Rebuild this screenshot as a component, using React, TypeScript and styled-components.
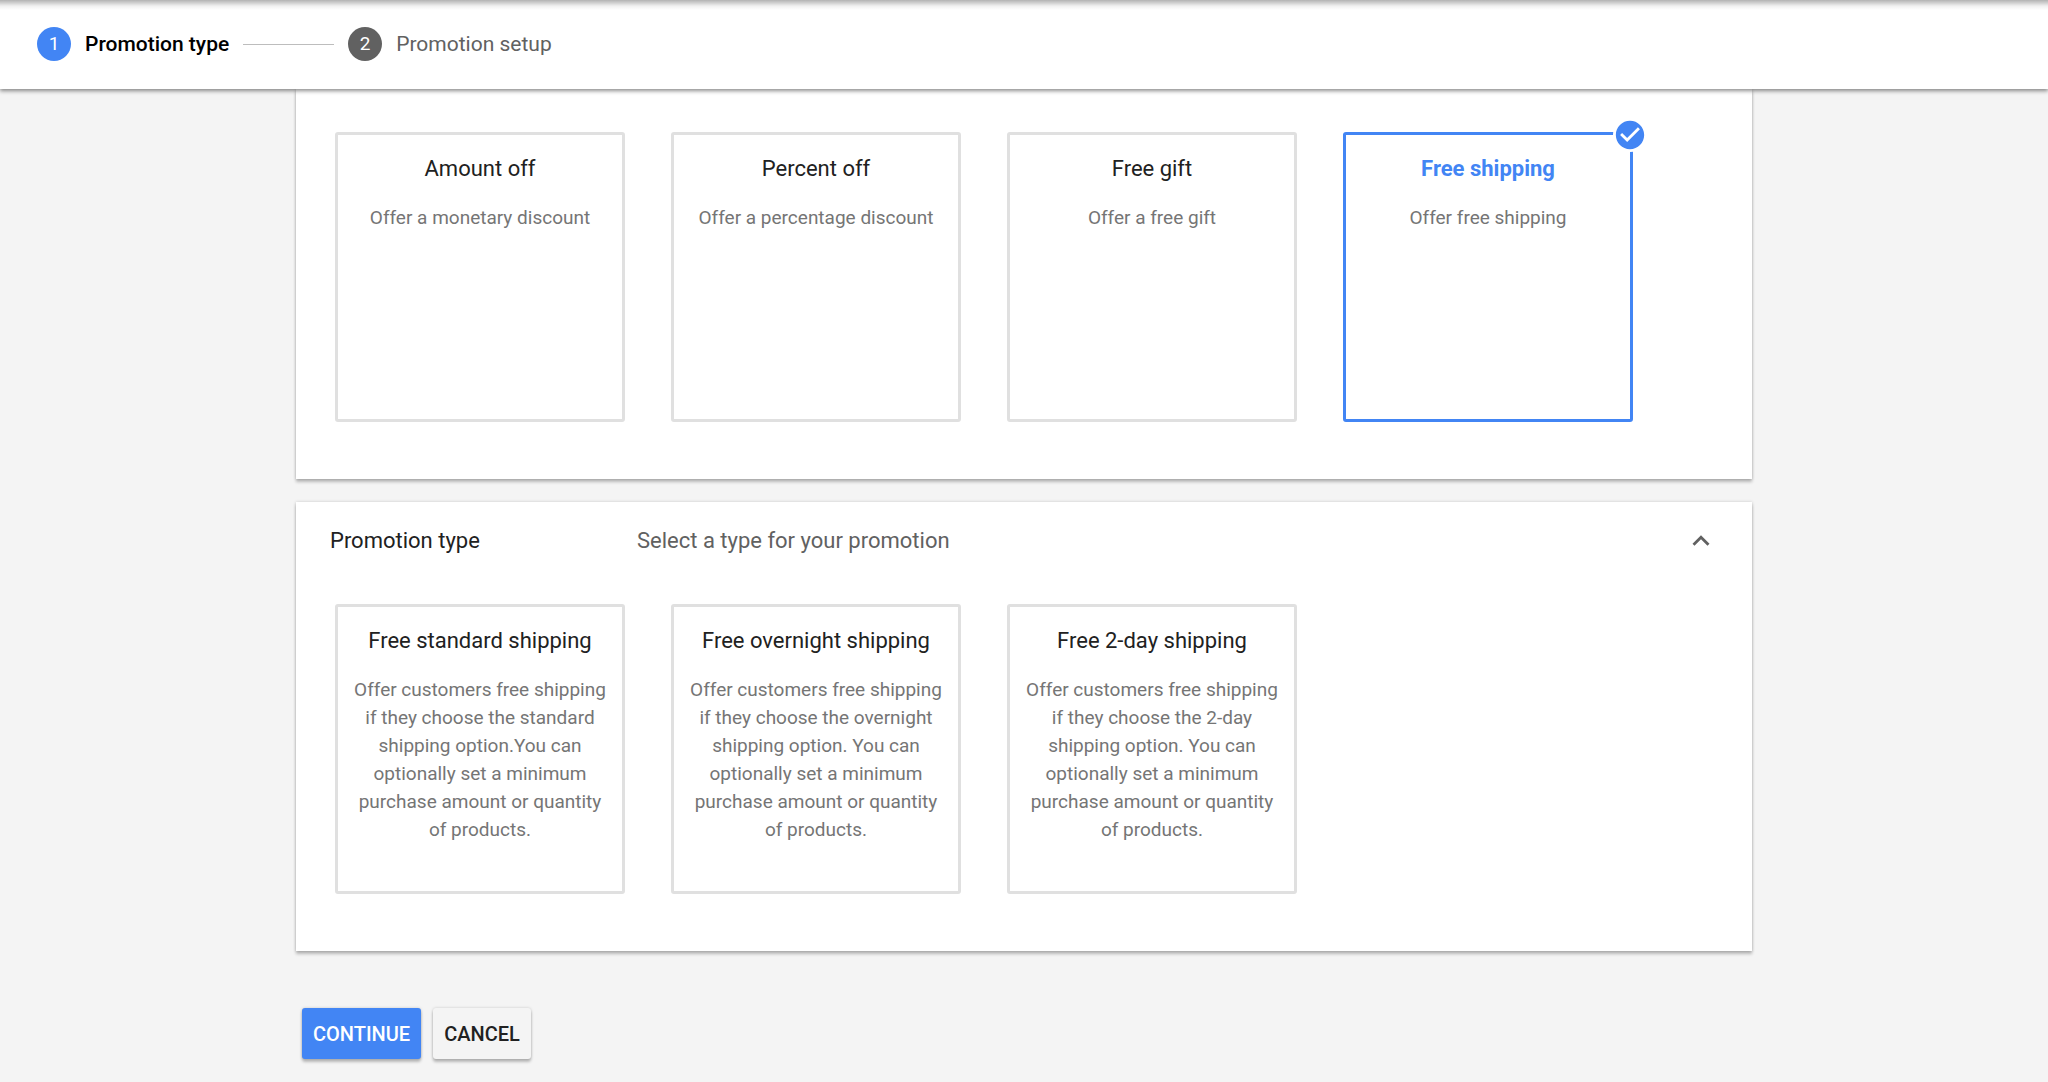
import React, { useState } from "react";
import styled, { createGlobalStyle } from "styled-components";

const GlobalStyle = createGlobalStyle`
  *, *::before, *::after { box-sizing: border-box; }
  body {
    margin: 0;
    background: #f4f4f4;
    color: #212121;
    font-family: Roboto, "Liberation Sans", sans-serif;
    font-size: 22px;
    line-height: 28px;
    -webkit-font-smoothing: antialiased;
  }
  h2, p, ol { margin: 0; padding: 0; }
  button { font: inherit; color: inherit; cursor: pointer; }
`;

const raised = "0 3px 3px rgba(0, 0, 0, 0.24), 0 0 3px rgba(0, 0, 0, 0.18)";

const Header = styled.header`
  position: relative;
  z-index: 1;
  padding: 27px 37px 28px;
  background: linear-gradient(rgba(0, 0, 0, 0.3), rgba(0, 0, 0, 0.06) 6px, transparent 10px) #fff;
  box-shadow: 0 2px 4px rgba(0, 0, 0, 0.45);
`;

const Steps = styled.ol`
  display: flex;
  align-items: center;
  list-style: none;
  font-size: 21px;
`;

const Step = styled.li<{ $active?: boolean }>`
  display: flex;
  align-items: center;
  gap: 14px;
  color: ${(p) => (p.$active ? "#000" : "#616161")};
  font-weight: ${(p) => (p.$active ? 500 : 400)};
`;

const StepNumber = styled.span<{ $active?: boolean }>`
  width: 34px;
  height: 34px;
  border-radius: 50%;
  background: ${(p) => (p.$active ? "#4285f4" : "#616161")};
  color: #fff;
  font-size: 19px;
  font-weight: 400;
  line-height: 34px;
  text-align: center;
`;

const StepLine = styled.li`
  width: 91px;
  height: 1px;
  margin: 0 14px;
  background: #bdbdbd;
`;

const Main = styled.main`
  width: 1456px;
  max-width: 100%;
  margin: 0 auto;
`;

const Panel = styled.section`
  margin-bottom: 23px;
  padding-bottom: 57px;
  background: #fff;
  box-shadow: ${raised};
`;

const PanelHeader = styled.div`
  display: flex;
  align-items: center;
  padding: 22px 34px;
`;

const PanelTitle = styled.h2`
  flex: 0 0 307px;
  font-size: 22px;
  font-weight: 400;
`;

const PanelHint = styled.p`
  flex: 1;
  color: #616161;
`;

const CollapseButton = styled.button`
  display: flex;
  padding: 0;
  border: 0;
  background: none;
  color: #616161;
`;

const CardGrid = styled.div`
  display: flex;
  flex-wrap: wrap;
  gap: 46px;
  padding: 43px 39px 0;

  ${PanelHeader} + & { padding-top: 24px; }
`;

const Card = styled.button<{ $selected: boolean }>`
  position: relative;
  display: flex;
  flex-direction: column;
  justify-content: flex-start;
  gap: 21px;
  width: 290px;
  height: 290px;
  padding: 20px 12px;
  border: 3px solid ${(p) => (p.$selected ? "#4285f4" : "#e0e0e0")};
  border-radius: 3px;
  background: #fff;
  text-align: center;
`;

const CardTitle = styled.span<{ $selected: boolean }>`
  width: 100%;
  color: ${(p) => (p.$selected ? "#4285f4" : "#212121")};
  font-weight: ${(p) => (p.$selected ? 700 : 400)};
`;

const CardText = styled.span`
  width: 100%;
  color: #757575;
  font-size: 19px;
`;

const CheckBadge = styled.span`
  position: absolute;
  top: -17px;
  right: -17px;
  display: flex;
  border-radius: 50%;
  background: #fff;
  color: #4285f4;
`;

const Actions = styled.div`
  display: flex;
  gap: 12px;
  margin-top: 57px;
  padding: 0 6px 23px;
`;

const ActionButton = styled.button<{ $primary?: boolean }>`
  height: 51px;
  padding: 0 11px;
  border: 0;
  border-radius: 3px;
  background: ${(p) => (p.$primary ? "#4285f4" : "#f4f4f4")};
  color: ${(p) => (p.$primary ? "#fff" : "#212121")};
  font-size: 20px;
  font-weight: 500;
  text-transform: uppercase;
  box-shadow: ${raised};
`;

const Icon = ({ path }: { path: string }) => (
  <svg width="34" height="34" viewBox="0 0 24 24" fill="currentColor" aria-hidden="true">
    <path d={path} />
  </svg>
);

const chevronUp = "M12 8l-6 6 1.41 1.41L12 10.83l4.59 4.58L18 14z";
const chevronDown = "M16.59 8.59L12 13.17 7.41 8.59 6 10l6 6 6-6z";
const checkCircle =
  "M12 2C6.48 2 2 6.48 2 12s4.48 10 10 10 10-4.48 10-10S17.52 2 12 2zm-2 15l-5-5 1.41-1.41L10 14.17l7.59-7.59L19 8l-9 9z";

type Option = { title: string; text: string };

const categories: Option[] = [
  { title: "Amount off", text: "Offer a monetary discount" },
  { title: "Percent off", text: "Offer a percentage discount" },
  { title: "Free gift", text: "Offer a free gift" },
  { title: "Free shipping", text: "Offer free shipping" },
];

const shippingTypes: Option[] = [
  {
    title: "Free standard shipping",
    text: "Offer customers free shipping if they choose the standard shipping option.You can optionally set a minimum purchase amount or quantity of products.",
  },
  {
    title: "Free overnight shipping",
    text: "Offer customers free shipping if they choose the overnight shipping option. You can optionally set a minimum purchase amount or quantity of products.",
  },
  {
    title: "Free 2-day shipping",
    text: "Offer customers free shipping if they choose the 2-day shipping option. You can optionally set a minimum purchase amount or quantity of products.",
  },
];

type OptionCardsProps = {
  options: Option[];
  value: string;
  onChange: (title: string) => void;
};

const OptionCards = ({ options, value, onChange }: OptionCardsProps) => (
  <CardGrid>
    {options.map(({ title, text }) => {
      const selected = title === value;
      return (
        <Card
          key={title}
          type="button"
          $selected={selected}
          aria-pressed={selected}
          onClick={() => onChange(title)}
        >
          <CardTitle $selected={selected}>{title}</CardTitle>
          <CardText>{text}</CardText>
          {selected && (
            <CheckBadge>
              <Icon path={checkCircle} />
            </CheckBadge>
          )}
        </Card>
      );
    })}
  </CardGrid>
);

export default function App() {
  const [category, setCategory] = useState("Free shipping");
  const [shipping, setShipping] = useState("");
  const [open, setOpen] = useState(true);

  return (
    <>
      <GlobalStyle />
      <Header>
        <Steps>
          <Step $active aria-current="step">
            <StepNumber $active>1</StepNumber>
            Promotion type
          </Step>
          <StepLine aria-hidden="true" />
          <Step>
            <StepNumber>2</StepNumber>
            Promotion setup
          </Step>
        </Steps>
      </Header>
      <Main>
        <Panel>
          <OptionCards options={categories} value={category} onChange={setCategory} />
        </Panel>
        <Panel>
          <PanelHeader>
            <PanelTitle>Promotion type</PanelTitle>
            <PanelHint>Select a type for your promotion</PanelHint>
            <CollapseButton
              type="button"
              aria-label="Toggle promotion type"
              aria-expanded={open}
              onClick={() => setOpen(!open)}
            >
              <Icon path={open ? chevronUp : chevronDown} />
            </CollapseButton>
          </PanelHeader>
          {open && <OptionCards options={shippingTypes} value={shipping} onChange={setShipping} />}
        </Panel>
        <Actions>
          <ActionButton type="button" $primary>
            Continue
          </ActionButton>
          <ActionButton type="button">Cancel</ActionButton>
        </Actions>
      </Main>
    </>
  );
}
